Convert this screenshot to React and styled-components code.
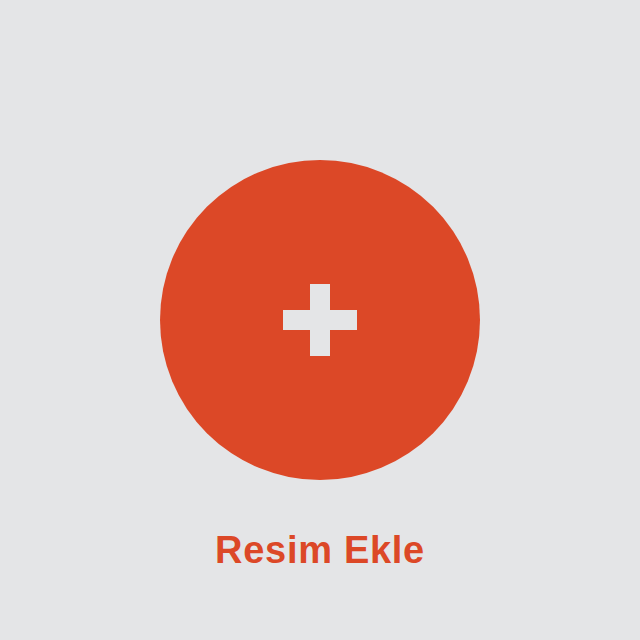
import styled, { createGlobalStyle } from 'styled-components'

const Global = createGlobalStyle`
  html, body {
    margin: 0;
    padding: 0;
    background: #e4e5e7;
  }
`

const Page = styled.div`
  width: 640px;
  height: 640px;
  display: flex;
  flex-direction: column;
  align-items: center;
  padding-top: 160px;
  box-sizing: border-box;
  background: #e4e5e7;
`

const AddButton = styled.button`
  width: 320px;
  height: 320px;
  border-radius: 50%;
  border: none;
  padding: 0;
  background: #dc4827;
  display: flex;
  align-items: center;
  justify-content: center;
  cursor: pointer;
`

const Label = styled.div`
  margin-top: 45px;
  font-family: "Liberation Sans", Arial, sans-serif;
  font-weight: 700;
  font-size: 38px;
  letter-spacing: 0.7px;
  line-height: 50px;
  color: #dc4827;
`

function App() {
  return (
    <Page>
      <Global />
      <AddButton aria-label="Resim Ekle">
        <svg width="74" height="72" viewBox="0 0 74 72">
          <rect x="27" y="0" width="20" height="72" fill="#e4e5e7" />
          <rect x="0" y="26" width="74" height="20" fill="#e4e5e7" />
        </svg>
      </AddButton>
      <Label>Resim Ekle</Label>
    </Page>
  )
}

export default App
